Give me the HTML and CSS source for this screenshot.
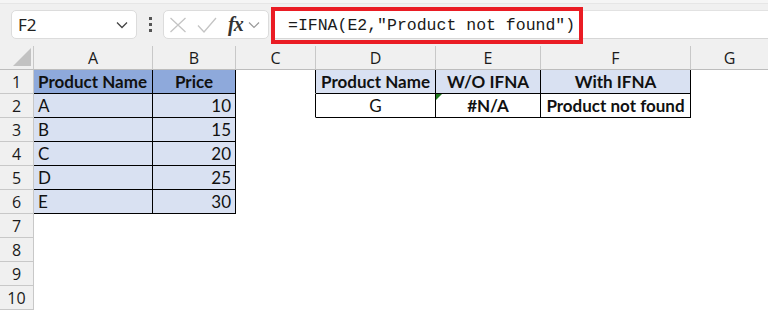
FILE: index.html
```html
<!DOCTYPE html>
<html lang="en">
<head>
    <meta charset="UTF-8">
    <title>IFNA - Excel</title>
    <link rel="stylesheet" href="styles.css">
</head>
<body>
    <div class="toolbar">
        <div class="name-box">
            <span>F2</span>
            <svg class="chev" width="12" height="8" viewBox="0 0 12 8" fill="none" stroke="#444" stroke-width="1.3">
                <path d="M1 1.5l5 5 5-5"/>
            </svg>
        </div>
        <div class="dots"><i></i><i></i><i></i></div>
        <div class="fx-box">
            <svg width="18" height="16" viewBox="0 0 18 16" fill="none" stroke="#c4c4c4" stroke-width="1.3">
                <path d="M1.5 1l15 14M16.5 1l-15 14"/>
            </svg>
            <svg width="20" height="16" viewBox="0 0 20 16" fill="none" stroke="#c4c4c4" stroke-width="1.3">
                <path d="M1 8.5l6 6.5 12-14"/>
            </svg>
            <span class="fx">fx</span>
            <svg width="12" height="8" viewBox="0 0 12 8" fill="none" stroke="#999" stroke-width="1.2">
                <path d="M1 1.5l5 5 5-5"/>
            </svg>
        </div>
        <div class="formula">
            <div class="formula-text">=IFNA(E2,"Product not found")</div>
        </div>
    </div>

    <div class="sheet">
        <div class="row head">
            <div class="corner"><svg width="18" height="18" viewBox="0 0 18 18"><path d="M18 0V18H0z" fill="#c2c2c2"/></svg></div>
            <div class="ch">A</div><div class="ch">B</div><div class="ch">C</div><div class="ch">D</div><div class="ch">E</div><div class="ch">F</div><div class="ch">G</div>
        </div>
        <div class="row">
            <div class="rh">1</div>
            <div class="c t1h">Product Name</div>
            <div class="c t1h mid">Price</div>
            <div class="c edge"></div>
            <div class="c t2h mid">Product Name</div>
            <div class="c t2h mid">W/O IFNA</div>
            <div class="c t2h mid">With IFNA</div>
            <div class="c"></div>
        </div>
        <div class="row">
            <div class="rh">2</div>
            <div class="c t1">A</div>
            <div class="c t1 num">10</div>
            <div class="c edge"></div>
            <div class="c t2 mid">G</div>
            <div class="c t2 mid bold err">#N/A</div>
            <div class="c t2 mid bold">Product not found</div>
            <div class="c"></div>
        </div>
        <div class="row">
            <div class="rh">3</div>
            <div class="c t1">B</div>
            <div class="c t1 num">15</div>
            <div class="c"></div><div class="c"></div><div class="c"></div><div class="c"></div><div class="c"></div>
        </div>
        <div class="row">
            <div class="rh">4</div>
            <div class="c t1">C</div>
            <div class="c t1 num">20</div>
            <div class="c"></div><div class="c"></div><div class="c"></div><div class="c"></div><div class="c"></div>
        </div>
        <div class="row">
            <div class="rh">5</div>
            <div class="c t1">D</div>
            <div class="c t1 num">25</div>
            <div class="c"></div><div class="c"></div><div class="c"></div><div class="c"></div><div class="c"></div>
        </div>
        <div class="row">
            <div class="rh">6</div>
            <div class="c t1">E</div>
            <div class="c t1 num">30</div>
            <div class="c"></div><div class="c"></div><div class="c"></div><div class="c"></div><div class="c"></div>
        </div>
        <div class="row"><div class="rh">7</div></div>
        <div class="row"><div class="rh">8</div></div>
        <div class="row"><div class="rh">9</div></div>
        <div class="row"><div class="rh">10</div></div>
    </div>
</body>
</html>
```

FILE: styles.css
```css
* {
    margin: 0;
    padding: 0;
    box-sizing: border-box;
}

body {
    width: 768px;
    height: 311px;
    overflow: hidden;
    background: #ffffff;
    font-family: 'Lato', 'Open Sans', sans-serif;
    color: #111;
}

/* formula bar */
.toolbar {
    height: 46px;
    background: #f0f0f0;
    border-top: 3px solid #f5f5f5;
    box-shadow: inset 0 1px 0 #e6e6e6;
    display: flex;
    align-items: center;
    padding-left: 11px;
}

.name-box {
    width: 126px;
    height: 29px;
    background: white;
    border: 1px solid #dcdcdc;
    border-radius: 5px;
    display: flex;
    align-items: center;
    justify-content: space-between;
    padding: 0 8px 0 6px;
    font-family: 'Noto Sans', 'Open Sans', sans-serif;
    font-size: 17px;
    color: #222;
}

.dots {
    width: 26px;
    display: flex;
    flex-direction: column;
    align-items: center;
    gap: 3px;
}

.dots i {
    width: 3px;
    height: 3px;
    background: #555;
}

.fx-box {
    width: 106px;
    height: 29px;
    background: white;
    border: 1px solid #dcdcdc;
    border-radius: 5px;
    display: flex;
    align-items: center;
    padding-left: 5px;
}

.fx-box svg:nth-child(2) {
    margin-left: 10px;
}

.fx {
    font-family: 'Liberation Serif', serif;
    font-style: italic;
    font-weight: bold;
    font-size: 20px;
    color: #333;
    margin-left: 11px;
    margin-right: 5px;
    letter-spacing: -1px;
}

.formula {
    flex: 1;
    height: 29px;
    margin-left: 2px;
    background: white;
    border-top: 1px solid #e2e2e2;
    border-bottom: 1px solid #d6d6d6;
    position: relative;
}

.formula-text {
    position: absolute;
    left: 0;
    top: -4px;
    width: 312px;
    height: 37px;
    border: 4px solid #ea1c24;
    padding-left: 13px;
    font-family: 'Liberation Mono', monospace;
    font-size: 16.5px;
    line-height: 29px;
    color: #1a1a1a;
}

/* grid */
.row {
    display: grid;
    grid-template-columns: 34px 119px 83px 80px 120px 105px 150px 1fr;
    height: 24px;
}

.head {
    background: #f0f0f0;
}

.corner, .ch, .rh {
    border-right: 1px solid #c8c8c8;
    border-bottom: 1px solid #bdbdbd;
    font-family: 'Open Sans', sans-serif;
    font-size: 16px;
    color: #1a1a1a;
    display: flex;
    align-items: center;
    justify-content: center;
}

.corner {
    justify-content: flex-end;
    align-items: flex-end;
    padding: 0 2px 3px 0;
}

.ch:last-child {
    border-right: none;
}

.rh {
    background: #f0f0f0;
    border-bottom-color: #c8c8c8;
}

.c {
    border-right: 1px solid transparent;
    border-bottom: 1px solid transparent;
    font-size: 17px;
    display: flex;
    align-items: center;
    padding: 0 4px;
    white-space: nowrap;
    position: relative;
}

.mid {
    justify-content: center;
}

.num {
    justify-content: flex-end;
}

.bold {
    font-weight: bold;
}

.edge {
    border-right-color: #000;
}

.t1h {
    background: #8ea9db;
    font-weight: bold;
    border-right-color: #000;
    border-bottom-color: #000;
}

.t1 {
    background: #d9e1f2;
    border-right-color: #000;
    border-bottom-color: #000;
}

.t2h {
    background: #d9e1f2;
    font-weight: bold;
    border-right-color: #000;
    border-bottom-color: #000;
}

.t2 {
    background: white;
    border-right-color: #000;
    border-bottom-color: #000;
}

.err::before {
    content: '';
    position: absolute;
    left: 0;
    top: 0;
    border-top: 6px solid #1e7a1e;
    border-right: 6px solid transparent;
}
```
